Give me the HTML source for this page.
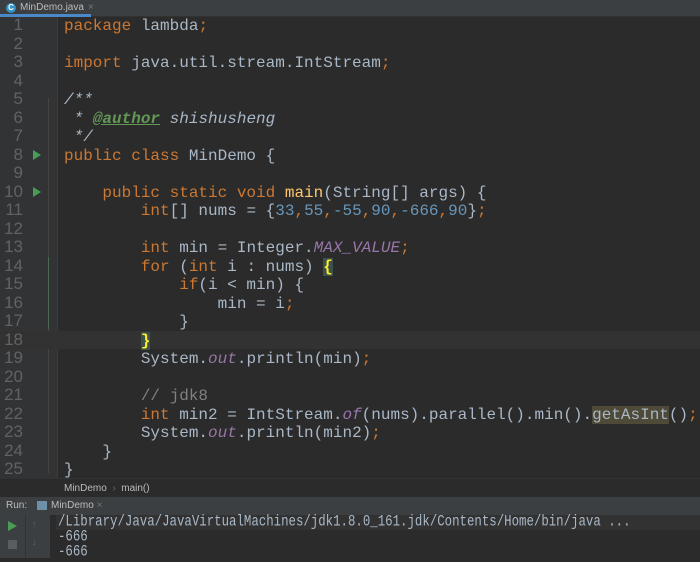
<!DOCTYPE html>
<html><head><meta charset="utf-8"><style>
*{margin:0;padding:0;box-sizing:border-box}
body{width:700px;height:558px;background:#2b2b2b;overflow:hidden;position:relative;font-family:"Liberation Mono",monospace}
.tabbar{position:absolute;left:0;top:0;width:700px;height:17px;background:#3c3f41;border-bottom:1px solid #323232}
.tab{position:absolute;left:0;top:0;width:91px;height:17px;background:#3c3f41;border-bottom:3px solid #4a88c7;font:10px "Liberation Sans",sans-serif;color:#bbb;padding:2px 0 0 20px}
.tab .ic{position:absolute;left:6px;top:3px;width:10px;height:10px;border-radius:50%;background:#3592c4;color:#fff;font-size:8px;line-height:10px;text-align:center;font-weight:bold}
.tab .x{color:#777;margin-left:4px}
.gutter{position:absolute;left:0;top:17px;width:58px;height:461px;background:#313335;border-right:1px solid #3a3a3a}
.lines{position:absolute;left:0;top:16px;width:700px}
.ln{height:18.5px;line-height:18.5px;font-size:16px;white-space:pre;position:relative}
.ln .n{position:absolute;left:0;width:23px;text-align:right;color:#606366;font-family:"Liberation Sans",sans-serif;font-size:17px}
.ln .c{position:absolute;left:64px;color:#a9b7c6;top:1px}
.cur{background:#323232}
.k{color:#cc7832}.num{color:#6897bb}.cm{color:#808080}.d{color:#629755;font-style:italic}.da{color:#629755;font-style:italic;font-weight:bold;text-decoration:underline}
.s{color:#9876aa;font-style:italic}.hl{background:#4e4a37}.br{background:#3b514d;color:#ffef28;font-weight:bold}
.run{position:absolute;width:0;height:0;border-left:8px solid #499c54;border-top:5px solid transparent;border-bottom:5px solid transparent;left:33px}
.crumb{position:absolute;left:0;top:478px;width:700px;height:19px;background:#2b2b2b;border-top:1px solid #323232;font:10px "Liberation Sans",sans-serif;color:#bbb;padding:4px 0 0 64px}
.runbar{position:absolute;left:0;top:497px;width:700px;height:18px;background:#3c3f41;font:10px "Liberation Sans",sans-serif;color:#bbb}
.console{position:absolute;left:0;top:515px;width:700px;height:43px;background:#2b2b2b}
.side{position:absolute;left:0;top:515px;width:50px;height:43px;background:#3c3f41}
.out{position:absolute;left:58px;font-size:12.4px;color:#a9b7c6;white-space:pre;line-height:15px;transform:scaleY(1.25);transform-origin:0 50%}
</style></head><body>
<div class="tabbar"><div class="tab"><span class="ic">C</span>MinDemo.java<span class="x">×</span></div></div>
<div class="gutter"></div>
<div style="position:absolute;left:48px;top:98px;width:1px;height:375px;background:#444"></div>
<div style="position:absolute;left:48px;top:257px;width:1px;height:72px;background:#4a6b52"></div>
<div class="run" style="top:150px"></div>
<div class="run" style="top:187px"></div>
<div class="lines">
<div class="ln"><span class="n">1</span><span class="c"><span class="k">package</span> lambda<span class="k">;</span></span></div>
<div class="ln"><span class="n">2</span></div>
<div class="ln"><span class="n">3</span><span class="c"><span class="k">import</span> java.util.stream.IntStream<span class="k">;</span></span></div>
<div class="ln"><span class="n">4</span></div>
<div class="ln"><span class="n">5</span><span class="c d">/**</span></div>
<div class="ln"><span class="n">6</span><span class="c d"> * <span class="da">@author</span> shishusheng</span></div>
<div class="ln"><span class="n">7</span><span class="c d"> */</span></div>
<div class="ln"><span class="n">8</span><span class="c"><span class="k">public class</span> MinDemo {</span></div>
<div class="ln"><span class="n">9</span></div>
<div class="ln"><span class="n">10</span><span class="c">    <span class="k">public static void</span> <span style="color:#ffc66d">main</span>(String[] args) {</span></div>
<div class="ln"><span class="n">11</span><span class="c">        <span class="k">int</span>[] nums = {<span class="num">33</span><span class="k">,</span><span class="num">55</span><span class="k">,</span><span class="num">-55</span><span class="k">,</span><span class="num">90</span><span class="k">,</span><span class="num">-666</span><span class="k">,</span><span class="num">90</span>}<span class="k">;</span></span></div>
<div class="ln"><span class="n">12</span></div>
<div class="ln"><span class="n">13</span><span class="c">        <span class="k">int</span> min = Integer.<span class="s">MAX_VALUE</span><span class="k">;</span></span></div>
<div class="ln"><span class="n">14</span><span class="c">        <span class="k">for</span> (<span class="k">int</span> i : nums) <span class="br">{</span></span></div>
<div class="ln"><span class="n">15</span><span class="c">            <span class="k">if</span>(i &lt; min) {</span></div>
<div class="ln"><span class="n">16</span><span class="c">                min = i<span class="k">;</span></span></div>
<div class="ln"><span class="n">17</span><span class="c">            }</span></div>
<div class="ln cur"><span class="n">18</span><span class="c">        <span class="br">}</span></span></div>
<div class="ln"><span class="n">19</span><span class="c">        System.<span class="s">out</span>.println(min)<span class="k">;</span></span></div>
<div class="ln"><span class="n">20</span></div>
<div class="ln"><span class="n">21</span><span class="c">        <span class="cm">// jdk8</span></span></div>
<div class="ln"><span class="n">22</span><span class="c">        <span class="k">int</span> min2 = IntStream.<span class="s">of</span>(nums).parallel().min().<span class="hl">getAsInt</span>()<span class="k">;</span></span></div>
<div class="ln"><span class="n">23</span><span class="c">        System.<span class="s">out</span>.println(min2)<span class="k">;</span></span></div>
<div class="ln"><span class="n">24</span><span class="c">    }</span></div>
<div class="ln"><span class="n">25</span><span class="c">}</span></div>
</div>
<div class="crumb">MinDemo &nbsp;<span style="color:#666">›</span>&nbsp; main()</div>
<div class="runbar"><span style="position:absolute;left:6px;top:3px">Run:</span><span style="position:absolute;left:37px;top:4px;width:10px;height:9px;background:#6e8fa8"></span><span style="position:absolute;left:51px;top:3px">MinDemo <span style="color:#777">×</span></span></div>
<div class="console"></div>
<div class="side"></div>
<div style="position:absolute;left:25px;top:515px;width:1px;height:43px;background:#323232"></div>
<div style="position:absolute;left:8px;top:521px;border-left:9px solid #499c54;border-top:5px solid transparent;border-bottom:5px solid transparent"></div>
<div style="position:absolute;left:8px;top:540px;width:9px;height:9px;background:#5a5d5f"></div>
<div style="position:absolute;left:31px;top:520px;color:#5a5d5f;font-size:11px">↑</div>
<div style="position:absolute;left:31px;top:537px;color:#5a5d5f;font-size:11px">↓</div>
<div style="position:absolute;left:56px;top:515px;width:644px;height:15px;background:#323232"></div>
<div class="out" style="top:515px;color:#a9b7c6">/Library/Java/JavaVirtualMachines/jdk1.8.0_161.jdk/Contents/Home/bin/java ...</div>
<div class="out" style="top:530px">-666</div>
<div class="out" style="top:545px">-666</div>
</body></html>
